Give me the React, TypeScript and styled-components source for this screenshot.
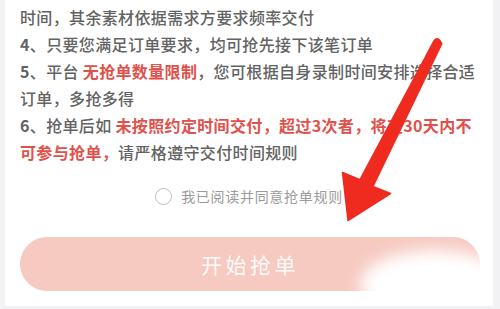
import React from "react";
import styled, { createGlobalStyle } from "styled-components";

const Global = createGlobalStyle`
  html, body { margin: 0; padding: 0; }
  body {
    width: 500px;
    height: 309px;
    overflow: hidden;
    background: #f2f2f4;
    font-family: "Noto Sans CJK SC", "Noto Sans", sans-serif;
  }
`;

const Card = styled.div`
  position: relative;
  margin: 0 7px 0 5px;
  height: 306px;
  background: #ffffff;
  padding: 4px 0 0 15px;
  box-sizing: border-box;
  overflow: hidden;
`;

const Rules = styled.div`
  font-size: 16px;
  line-height: 27px;
  letter-spacing: 0.35px;
  font-weight: 500;
  color: #636363;
`;

const Line = styled.div`
  white-space: nowrap;
`;

const Num = styled.span`
  font-weight: 700;
`;

const Warn = styled.span`
  color: #e0514b;
  font-weight: 700;
`;

const AgreeRow = styled.div`
  margin-top: 20px;
  height: 20px;
  display: flex;
  align-items: center;
  justify-content: center;
  gap: 9px;
  padding-right: 15px;
`;

const Radio = styled.span`
  width: 15px;
  height: 15px;
  border-radius: 50%;
  border: 1.5px solid #bdbdbd;
  box-sizing: content-box;
`;

const AgreeText = styled.span`
  font-size: 14px;
  letter-spacing: 0.7px;
  color: #9b9b9b;
`;

const StartButton = styled.button`
  display: flex;
  align-items: center;
  justify-content: center;
  margin: 31px 13px 0 0;
  width: calc(100% - 13px);
  height: 54px;
  border: none;
  border-radius: 27px;
  background: #f6cac1;
  color: rgba(255, 255, 255, 0.92);
  font-family: "Noto Sans CJK SC", sans-serif;
  font-size: 21px;
  letter-spacing: 3.5px;
  padding: 0 0 0 0;
`;

const Smudge = styled.div`
  position: absolute;
  left: 355px;
  top: 250px;
  width: 150px;
  height: 70px;
  border-radius: 50%;
  background: #ffffff;
  filter: blur(8px);
`;

const ArrowSvg = styled.svg`
  position: absolute;
  left: -5px;
  top: 0;
  filter: blur(0.6px);
`;

export default function App() {
  return (
    <>
      <Global />
      <Card>
        <Rules>
          <Line>时间，其余素材依据需求方要求频率交付</Line>
          <Line>
            <Num>4</Num>、只要您满足订单要求，均可抢先接下该笔订单
          </Line>
          <Line>
            <Num>5</Num>、平台 <Warn>无抢单数量限制</Warn>，您可根据自身录制时间安排选择合适
          </Line>
          <Line>订单，多抢多得</Line>
          <Line>
            <Num>6</Num>、抢单后如 <Warn>未按照约定时间交付，超过3次者，将在30天内不</Warn>
          </Line>
          <Line>
            <Warn>可参与抢单，</Warn>请严格遵守交付时间规则
          </Line>
        </Rules>
        <AgreeRow>
          <Radio />
          <AgreeText>我已阅读并同意抢单规则</AgreeText>
        </AgreeRow>
        <StartButton>开始抢单</StartButton>
        <Smudge />
        <ArrowSvg width="500" height="309" viewBox="0 0 500 309">
          <path
            d="M434.4 40.2 Q438 36 441.8 43.6 L373 186.4 L390.5 193.5 L348 220.5 L342.5 172.5 L360 179.6 Z"
            fill="#ef2b20"
            stroke="#ef2b20"
            strokeWidth="1.5"
            strokeLinejoin="round"
          />
        </ArrowSvg>
      </Card>
    </>
  );
}
